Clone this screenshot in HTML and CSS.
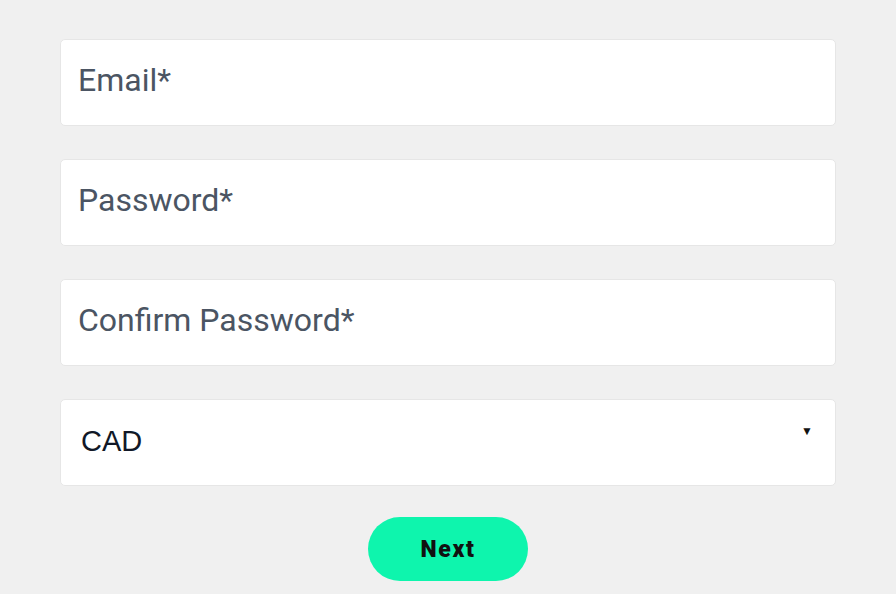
FILE: index.html
```html
<!DOCTYPE html>
<html lang="en">
<head>
  <meta charset="UTF-8">
  <meta name="viewport" content="width=device-width, initial-scale=1.0">
  <title>Sign up</title>
  <link rel="stylesheet" href="styles.css">
</head>
<body>
  <form class="signup">
    <input type="email" class="field" placeholder="Email*">
    <input type="password" class="field" placeholder="Password*">
    <input type="password" class="field" placeholder="Confirm Password*">
    <div class="select-wrap">
      <select class="field select">
        <option>CAD</option>
        <option>USD</option>
      </select>
      <span class="caret">&#9660;</span>
    </div>
    <button type="submit" class="next">Next</button>
  </form>
</body>
</html>
```

FILE: styles.css
```css
body {
  margin: 0;
  background: #f0f0f0;
  font-family: Roboto, "Noto Sans", sans-serif;
}
.signup {
  display: flex;
  flex-direction: column;
  gap: 33px;
  padding: 39px 60px 0;
}
.field {
  box-sizing: border-box;
  width: 100%;
  height: 87px;
  padding: 0 17px 5px;
  border: 1px solid #e6e6e6;
  border-radius: 5px;
  background: #fff;
  font-family: Roboto, "Noto Sans", sans-serif;
  font-size: 32px;
  color: #111827;
  outline: none;
}
.field::placeholder {
  color: #4b5563;
}
.select-wrap {
  position: relative;
}
.select {
  appearance: none;
  font-family: "Liberation Sans", Arial, sans-serif;
  font-size: 29px;
  padding: 0 0 3px 20px;
}
.caret {
  position: absolute;
  right: 23px;
  top: 25px;
  font-size: 12px;
  color: #111;
  pointer-events: none;
}
.next {
  align-self: center;
  margin-top: -2px;
  width: 160px;
  height: 64px;
  border: none;
  border-radius: 32px;
  background: #0ef5ad;
  color: #111;
  font-family: Roboto, sans-serif;
  font-weight: 900;
  font-size: 23px;
  letter-spacing: 1.6px;
  cursor: pointer;
}
```
